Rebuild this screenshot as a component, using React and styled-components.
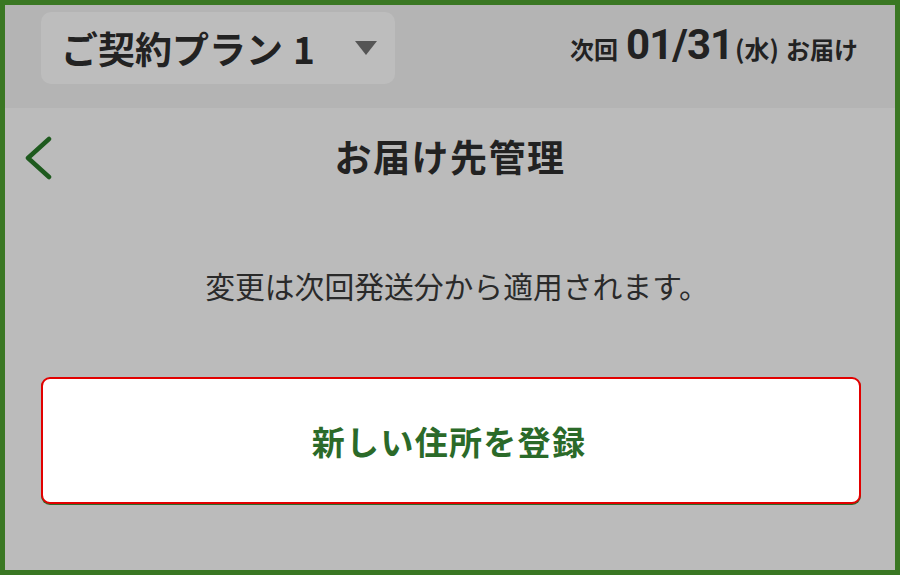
import React from 'react';
import styled, { createGlobalStyle } from 'styled-components';

const GlobalStyle = createGlobalStyle`
  html, body {
    margin: 0;
    padding: 0;
    background: #bbbbbb;
  }
  * {
    box-sizing: border-box;
  }
`;

const Frame = styled.div`
  width: 900px;
  height: 575px;
  border: 5px solid #3a7723;
  background: #bbbbbb;
  display: flex;
  flex-direction: column;
  font-family: "Noto Sans CJK JP", "Noto Sans", sans-serif;
  color: #222;
  overflow: hidden;
`;

const Header = styled.header`
  height: 103px;
  background: #b4b4b4;
  padding: 7px 37px 0 36px;
  display: flex;
  align-items: flex-start;
  justify-content: space-between;
`;

const PlanSelect = styled.button`
  width: 354px;
  height: 72px;
  border: none;
  border-radius: 10px;
  background: #bdbdbd;
  display: flex;
  align-items: center;
  justify-content: space-between;
  padding: 0 18px 0 20px;
  font-family: inherit;
  font-size: 37px;
  font-weight: 700;
  color: #222;
  cursor: pointer;
`;

const PlanNo = styled.span`
  margin-left: 10px;
`;

const Caret = styled.span`
  width: 0;
  height: 0;
  border-left: 11px solid transparent;
  border-right: 11px solid transparent;
  border-top: 14px solid #555;
`;

const NextDelivery = styled.div`
  height: 72px;
  display: flex;
  align-items: baseline;
  padding-top: 8px;
  font-weight: 700;
`;

const Small = styled.span`
  font-size: ${(p) => p.size || 24}px;
  margin: ${(p) => p.gap || '0'};
`;

const Date = styled.span`
  font-family: "Roboto", "Noto Sans", sans-serif;
  font-size: 42px;
  font-weight: 700;
  letter-spacing: -1px;
  margin: 0 2px 0 8px;
`;

const NavRow = styled.div`
  height: 100px;
  display: grid;
  grid-template-columns: 1fr auto 1fr;
  align-items: center;
`;

const BackButton = styled.button`
  justify-self: start;
  background: none;
  border: none;
  padding: 0 0 0 18px;
  display: flex;
  cursor: pointer;
`;

const Title = styled.h1`
  margin: 0 0 4px;
  font-size: 37px;
  font-weight: 700;
  letter-spacing: 1.5px;
`;

const Notice = styled.p`
  margin: 60px 0 0;
  padding-left: 14px;
  text-align: center;
  font-size: 29.8px;
  font-weight: 400;
  line-height: 34px;
  color: #2a2a2a;
`;

const RegisterButton = styled.button`
  margin: 75px 34px 0 36px;
  height: 127px;
  background: #fff;
  border: 2px solid #e20000;
  border-radius: 9px;
  box-shadow: 0 1px 0 #2d6a2a;
  font-family: inherit;
  font-size: 33px;
  font-weight: 700;
  color: #2b6a29;
  letter-spacing: 1.3px;
  padding: 0 4px 0 0;
  cursor: pointer;
`;

export default function App() {
  return (
    <>
      <GlobalStyle />
      <Frame>
        <Header>
          <PlanSelect>
            <span>
              ご契約プラン<PlanNo>1</PlanNo>
            </span>
            <Caret />
          </PlanSelect>
          <NextDelivery>
            <Small>次回</Small>
            <Date>01/31</Date>
            <Small size={25}>(水)</Small>
            <Small gap="0 0 0 7px">お届け</Small>
          </NextDelivery>
        </Header>
        <NavRow>
          <BackButton aria-label="戻る">
            <svg width="30" height="44" viewBox="0 0 30 44">
              <polyline
                points="26,3 5,22 26,41"
                fill="none"
                stroke="#1e5a1e"
                strokeWidth="4.5"
                strokeLinecap="round"
                strokeLinejoin="round"
              />
            </svg>
          </BackButton>
          <Title>お届け先管理</Title>
          <span />
        </NavRow>
        <Notice>変更は次回発送分から適用されます。</Notice>
        <RegisterButton>新しい住所を登録</RegisterButton>
      </Frame>
    </>
  );
}
